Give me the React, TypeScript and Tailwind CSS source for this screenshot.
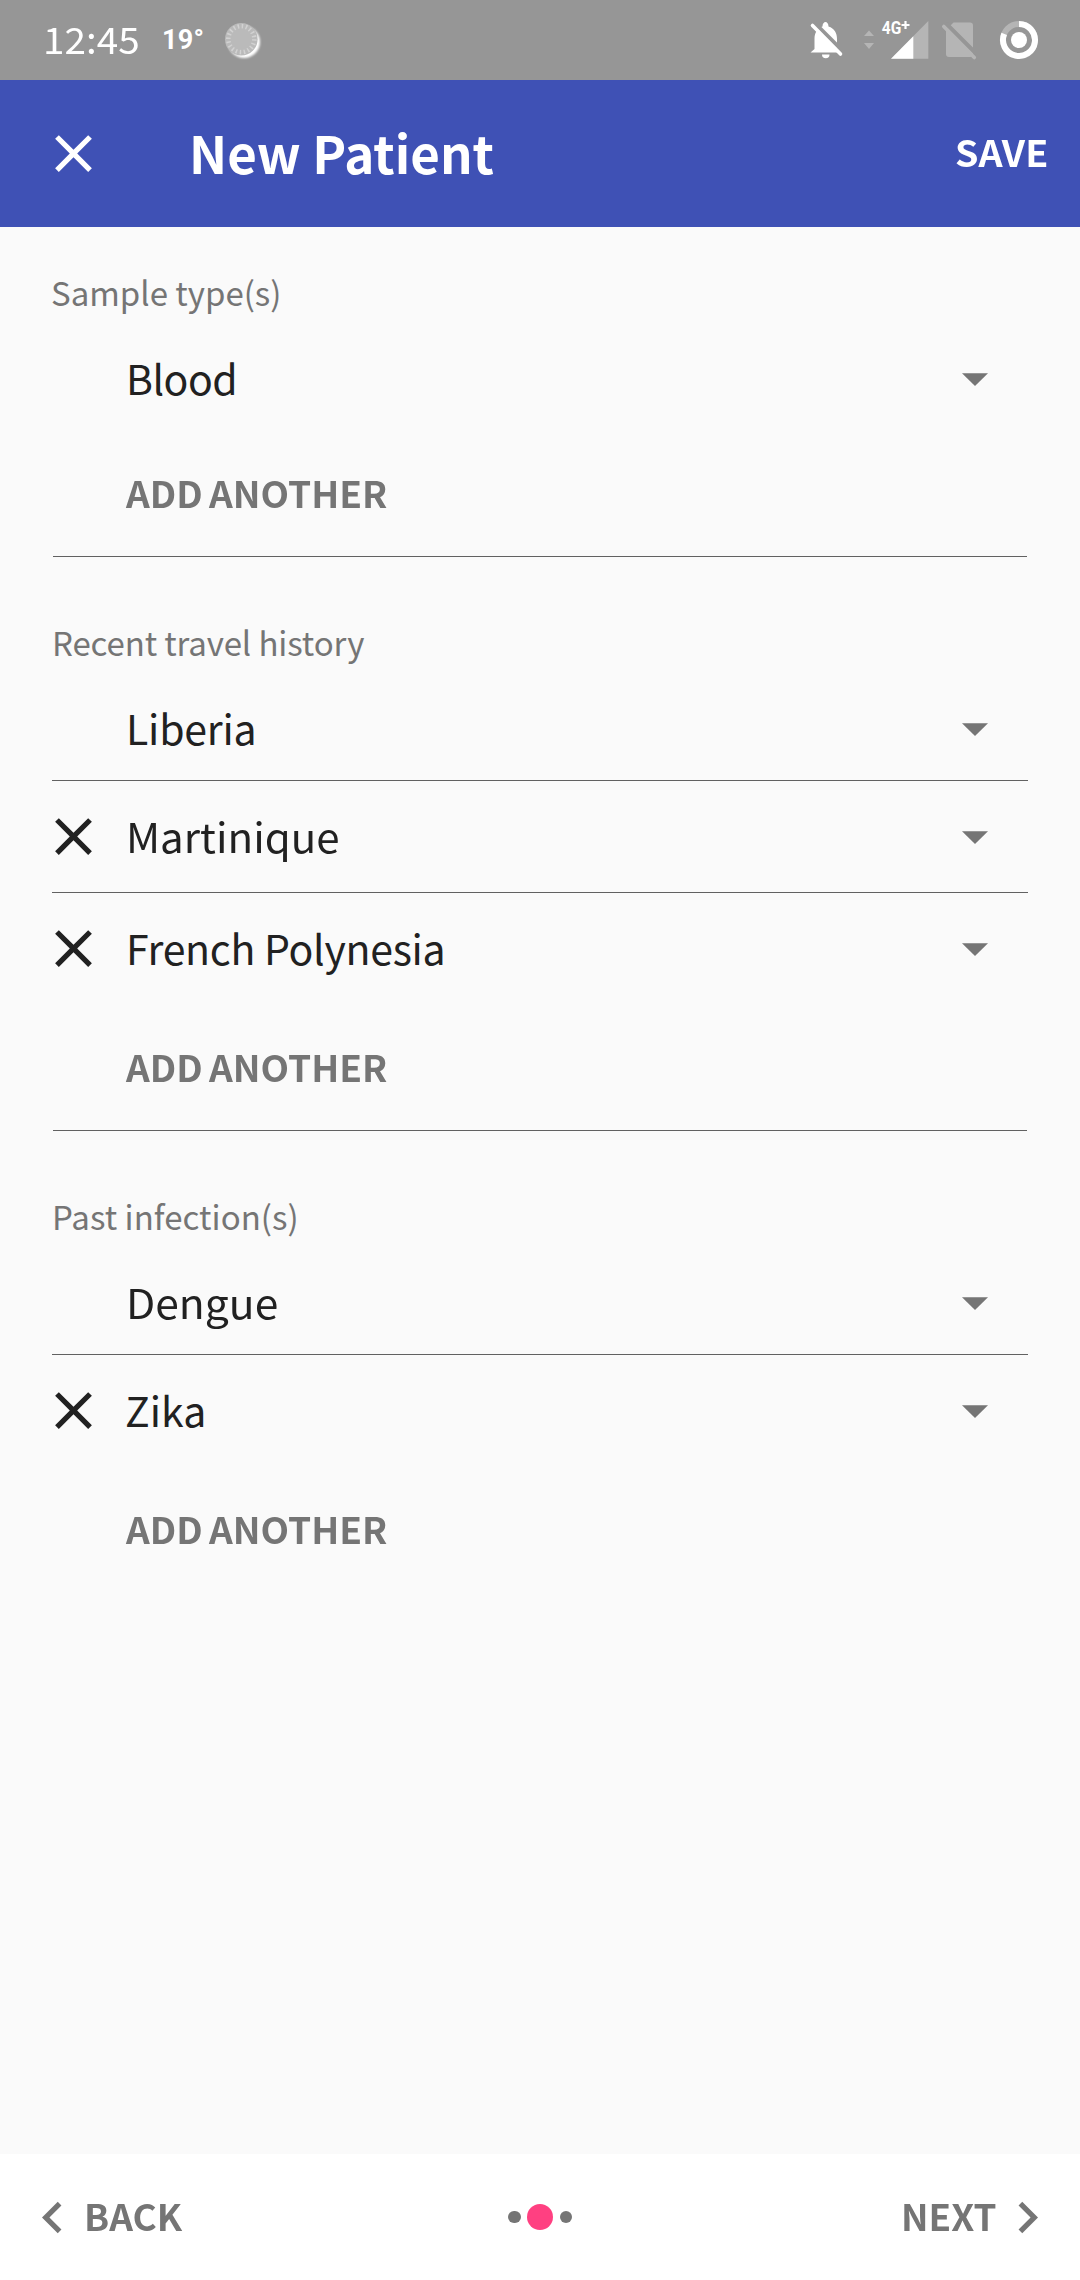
type Entry = { name: string; fit: string };
type Section = { label: string; labelFit: string; entries: Entry[] };

const sections: Section[] = [
  {
    label: "Sample type(s)",
    labelFit: "-ml-px",
    entries: [{ name: "Blood", fit: "tracking-[-0.5px]" }],
  },
  {
    label: "Recent travel history",
    labelFit: "tracking-[-0.13px]",
    entries: [
      { name: "Liberia", fit: "tracking-[-0.2px]" },
      { name: "Martinique", fit: "origin-left scale-x-[1.025]" },
      { name: "French Polynesia", fit: "tracking-[-0.28px]" },
    ],
  },
  {
    label: "Past infection(s)",
    labelFit: "tracking-[0.03px]",
    entries: [
      { name: "Dengue", fit: "origin-left scale-x-[1.038]" },
      { name: "Zika", fit: "-translate-x-px" },
    ],
  },
];

function CloseIcon() {
  return (
    <svg viewBox="0 0 24 24" className="size-[63px] shrink-0" fill="currentColor">
      <path d="M19 6.41L17.59 5 12 10.59 6.41 5 5 6.41 10.59 12 5 17.59 6.41 19 12 13.41 17.59 19 19 17.59 13.41 12z" />
    </svg>
  );
}

function StatusBar() {
  return (
    <header className="flex h-20 items-center bg-[#969696] pl-[43px] text-white">
      <span className="w-[119px] pb-1 text-[37px] leading-[40px]">
        <span className="inline-block origin-left scale-x-[1.045]">12:45</span>
      </span>
      <span className="w-[58px] font-['Roboto',sans-serif] text-[27px] leading-[40px] font-bold tracking-[0.2px]">19°</span>
      <svg viewBox="220 16 46 46" className="h-[46px] w-[46px]">
        <defs>
          <filter id="glow" x="-20%" y="-20%" width="140%" height="140%">
            <feGaussianBlur stdDeviation="0.8" />
          </filter>
        </defs>
        <circle cx="244" cy="41" r="16" fill="#fff" filter="url(#glow)" />
        <circle cx="241.3" cy="38.2" r="16.3" fill="#bababa" />
        <circle cx="241.3" cy="38.2" r="13" fill="none" stroke="#d2d2d2" strokeWidth="4.5" strokeDasharray="1.5 2.584" />
      </svg>
      <div className="ml-auto flex pr-[17px]">
        <svg viewBox="806 0 40 80" className="h-20 w-10">
          <path d="M822.5 26.500c0-6 6-6 6 0 6 2 8.500 6.500 8.500 12.500v10l4.500 3.500H810.500l4-3.500V39c0-6 2.500-10.500 8-12.500z" fill="#fff" />
          <path d="M822 54.500h7.500a3.750 3.750 0 0 1-7.500 0z" fill="#fff" />
          <path d="M814.500 23l29 29" stroke="#969696" strokeWidth="4" />
          <path d="M812.500 25.500l28 28.500" stroke="#fff" strokeWidth="3.600" strokeLinecap="round" />
        </svg>
        <svg viewBox="846 0 84 80" className="h-20 w-[84px]">
          <path d="M864 36l5-5.500 5 5.500zM864 43l5 6 5-6z" fill="#b5b5b5" />
          <path d="M891 58.700L928.300 21v37.700z" fill="#b5b5b5" />
          <path d="M891 58.700L913.300 36.200v22.500z" fill="#fff" />
          <text x="881.800" y="34" textLength="19.500" lengthAdjust="spacingAndGlyphs" fill="#fff" className="font-['Roboto',sans-serif] text-[18.500px] font-bold">4G</text>
          <path d="M905.500 21v8M901.500 25h8" stroke="#fff" strokeWidth="2.200" />
        </svg>
        <svg viewBox="930 0 60 80" className="h-20 w-[60px]">
          <path d="M953.500 22.500H970a3 3 0 0 1 3 3V54a3 3 0 0 1-3 3H949a3 3 0 0 1-3-3V30z" fill="#b5b5b5" />
          <path d="M946 23.500l30 30" stroke="#969696" strokeWidth="4" />
          <path d="M943.800 26.500l30.500 31" stroke="#b5b5b5" strokeWidth="3.600" strokeLinecap="round" />
        </svg>
        <svg viewBox="990 0 73 80" className="h-20 w-[73px]">
          <circle cx="1019" cy="40" r="16" fill="none" stroke="#b5b5b5" strokeWidth="6" />
          <path d="M1019 24a16 16 0 1 1-14.800 9.900" fill="none" stroke="#fff" strokeWidth="6" />
          <circle cx="1019" cy="40" r="8" fill="#fff" />
        </svg>
      </div>
    </header>
  );
}

function EntryRow({ entry, first, last }: { entry: Entry; first: boolean; last: boolean }) {
  return (
    <div className={last ? "mx-[52px]" : "mx-[52px] border-b border-[#616161]"}>
      <div className={first ? "-ml-[10px] flex h-[103px] items-center" : "-ml-[10px] flex h-[111px] items-center"}>
        {first ? <span className="w-[63px]" /> : <CloseIcon />}
        <span className={`ml-[21px] pb-[3px] text-[41px] leading-[60px] ${entry.fit}`}>{entry.name}</span>
        <svg viewBox="0 0 26 15" className="mr-10 ml-auto h-[15px] w-[26px] text-[#757575]" fill="currentColor">
          <path d="M0 2.300h26L13 15z" />
        </svg>
      </div>
    </div>
  );
}

function FormSection({ section, last }: { section: Section; last: boolean }) {
  return (
    <section>
      <h2 className="mb-[15px] ml-[52px] pt-px text-[33px] leading-[40px] text-[#757575]">
        <span className={section.labelFit}>{section.label}</span>
      </h2>
      {section.entries.map((entry, i) => (
        <EntryRow key={entry.name} entry={entry} first={i === 0} last={i === section.entries.length - 1} />
      ))}
      <div className={last ? "mx-[53px] pt-[13px]" : "mx-[53px] mb-16 border-b border-[#616161] pt-[13px] pb-[15px]"}>
        <button className="ml-[73px] block origin-left scale-x-[1.03] text-[36px] leading-[98px] font-bold text-[#757575] [word-spacing:-2px]">ADD ANOTHER</button>
      </div>
    </section>
  );
}

export default function App() {
  return (
    <div className="flex h-[2280px] w-[1080px] flex-col overflow-hidden bg-[#fafafa] font-['Noto_Sans_CJK_SC',sans-serif] text-[#212121]">
      <StatusBar />
      <div className="flex h-[147px] items-center bg-[#3f51b5] pr-[32px] pl-[42px] text-white">
        <CloseIcon />
        <h1 className="ml-[84px] pb-1 text-[51px] leading-[70px] font-bold">New Patient</h1>
        <button className="ml-auto origin-right scale-x-[1.045] pb-[5px] text-[36px] leading-[60px] font-bold">SAVE</button>
      </div>
      <main className="flex-1 pt-11">
        {sections.map((s, i) => (
          <FormSection key={s.label} section={s} last={i === sections.length - 1} />
        ))}
      </main>
      <footer className="grid h-[126px] grid-cols-3 items-center bg-white text-[36px] leading-[60px] font-bold text-[#757575]">
        <button className="flex items-center pl-[21px]">
          <svg viewBox="0 0 24 24" className="size-[63px]" fill="currentColor">
            <path d="M15.41 7.410L14 6l-6 6 6 6 1.410-1.410L10.830 12z" />
          </svg>
          <span className="origin-left scale-x-[1.027] pb-1">BACK</span>
        </button>
        <div className="flex items-center justify-center gap-[6.500px]">
          <span className="size-[12.700px] rounded-full bg-[#757575]" />
          <span className="size-[26px] rounded-full bg-[#ff4081]" />
          <span className="size-[12.700px] rounded-full bg-[#757575]" />
        </div>
        <button className="flex items-center justify-end pr-[21px]">
          <span className="origin-right scale-x-[1.021] pb-1">NEXT</span>
          <svg viewBox="0 0 24 24" className="size-[63px]" fill="currentColor">
            <path d="M10 6L8.590 7.410 13.170 12l-4.580 4.590L10 18l6-6z" />
          </svg>
        </button>
      </footer>
    </div>
  );
}
